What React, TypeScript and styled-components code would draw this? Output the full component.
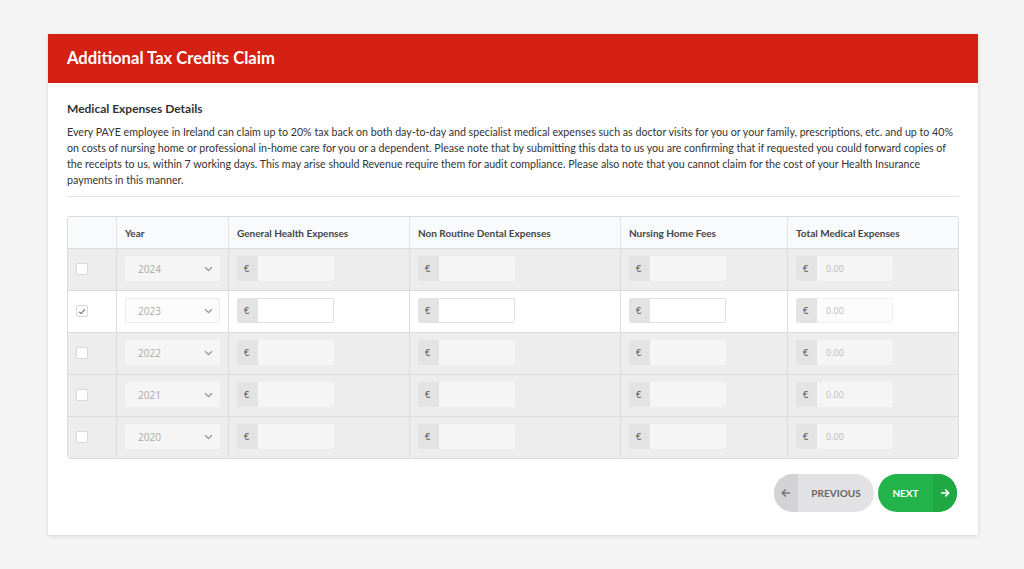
import React from "react";
import styled, { createGlobalStyle } from "styled-components";

const Global = createGlobalStyle`
  html, body { margin: 0; padding: 0; background: #f4f4f4; }
  body { font-family: Lato, "Open Sans", Arial, sans-serif; color: #333; }
  * { box-sizing: border-box; }
`;

const Page = styled.div`
  padding: 34px 46px 34px 48px;
  min-height: 569px;
`;

const Card = styled.div`
  width: 930px;
  background: #fff;
  box-shadow: 0 1px 4px rgba(0, 0, 0, 0.14);
`;

const Header = styled.div`
  height: 49px;
  background: #d42114;
  display: flex;
  align-items: center;
  padding: 0 19px 1px;
`;

const Title = styled.h1`
  margin: 0;
  font-size: 16.6px;
  font-weight: 700;
  color: #fff;
`;

const Body = styled.div`
  padding: 18px 19px 23px 19px;
`;

const SectionTitle = styled.h2`
  margin: 0 0 7px;
  font-size: 12px;
  line-height: 16px;
  font-weight: 700;
  color: #333;
`;

const Para = styled.p`
  margin: 0;
  font-size: 10.66px;
  line-height: 16px;
  color: #333;
`;

const Rule = styled.hr`
  border: 0;
  border-top: 1px solid #e2e2e2;
  margin: 8px 0 19px;
`;

const Table = styled.div`
  border: 1px solid #dcdcdc;
  border-radius: 3px;
  overflow: hidden;
  display: grid;
  grid-template-columns: 48px 112px 181px 211px 167px 1fr;
`;

const Th = styled.div<{ $first?: boolean }>`
  height: 31px;
  background: #f9fafc;
  font-size: 10px;
  font-weight: 700;
  color: #444;
  display: flex;
  align-items: center;
  padding: 0 8px;
  border-left: ${(p) => (p.$first ? "0" : "1px solid #e2e2e2")};
`;

const Td = styled.div<{ $first?: boolean; $active?: boolean }>`
  height: 42px;
  background: ${(p) => (p.$active ? "#fff" : "#ededed")};
  border-left: ${(p) => (p.$first ? "0" : "1px solid #dcdcdc")};
  border-top: 1px solid #dcdcdc;
  display: flex;
  align-items: flex-start;
  padding: 7px 8px 0;
`;

const CheckBox = styled.span`
  width: 12px;
  height: 12px;
  margin-top: 7px;
  border: 1px solid #d8d8d8;
  border-radius: 2px;
  background: #fff;
  display: flex;
  align-items: center;
  justify-content: center;
`;

const Select = styled.div<{ $active?: boolean }>`
  width: 96px;
  height: 25px;
  border-radius: 2px;
  background: ${(p) => (p.$active ? "#fcfcfc" : "#f5f5f5")};
  border: 1px solid ${(p) => (p.$active ? "#ececec" : "#f5f5f5")};
  display: flex;
  align-items: center;
  justify-content: space-between;
  padding: 0 6px 0 12px;
  font-size: 10px;
  color: #aaa;
  font-family: "Open Sans", Lato, sans-serif;
`;

const Group = styled.div`
  display: flex;
  height: 25px;
`;

const Addon = styled.span`
  width: 21px;
  background: #e3e3e3;
  border-radius: 2px 0 0 2px;
  font-size: 9px;
  color: #555;
  display: flex;
  align-items: center;
  padding-left: 7px;
`;

const Input = styled.span<{ $active?: boolean; $total?: boolean }>`
  width: 76px;
  border-radius: 0 2px 2px 0;
  background: ${(p) => (p.$active ? (p.$total ? "#fcfcfc" : "#fff") : "#f5f5f5")};
  border: 1px solid ${(p) => (p.$active ? (p.$total ? "#f0f0f0" : "#e0e0e0") : "#f5f5f5")};
  border-left: 0;
  font-size: 9px;
  color: #bbb;
  display: flex;
  align-items: center;
  padding-left: 9px;
  font-family: "Open Sans", Lato, sans-serif;
`;

const Actions = styled.div`
  display: flex;
  justify-content: flex-end;
  gap: 4px;
  margin-top: 15px;
  padding-right: 2px;
`;

const Btn = styled.button<{ $green?: boolean }>`
  height: 38px;
  border: 0;
  border-radius: 19px;
  overflow: hidden;
  display: flex;
  padding: 0;
  font-family: Lato, sans-serif;
  font-size: 10px;
  font-weight: 700;
  background: ${(p) => (p.$green ? "#22b34b" : "#e2e2e4")};
  color: ${(p) => (p.$green ? "#fff" : "#666")};
  cursor: pointer;
`;

const BtnIcon = styled.span<{ $green?: boolean }>`
  width: 24px;
  height: 100%;
  display: flex;
  align-items: center;
  justify-content: center;
  background: ${(p) => (p.$green ? "#1fa844" : "#d3d3d5")};
`;

const BtnLabel = styled.span<{ $w: number }>`
  width: ${(p) => p.$w}px;
  height: 100%;
  display: flex;
  align-items: center;
  justify-content: center;
`;

const Chevron = () => (
  <svg width="9" height="6" viewBox="0 0 9 6">
    <path d="M1 1.2 L4.5 4.5 L8 1.2" fill="none" stroke="#999" strokeWidth="1.3" />
  </svg>
);

const Check = () => (
  <svg width="8" height="7" viewBox="0 0 8 7">
    <path d="M1 3.8 L3 5.6 L7 1.2" fill="none" stroke="#888" strokeWidth="1.4" />
  </svg>
);

const Arrow = ({ dir, color }: { dir: "l" | "r"; color: string }) => (
  <svg width="10" height="10" viewBox="0 0 10 10" style={{ transform: dir === "l" ? "scaleX(-1)" : undefined }}>
    <path d="M1 5 H8.5 M5.2 1.5 L8.7 5 L5.2 8.5" fill="none" stroke={color} strokeWidth="1.6" />
  </svg>
);

const years = [
  { y: "2024", active: false },
  { y: "2023", active: true },
  { y: "2022", active: false },
  { y: "2021", active: false },
  { y: "2020", active: false },
];

const heads = [
  "",
  "Year",
  "General Health Expenses",
  "Non Routine Dental Expenses",
  "Nursing Home Fees",
  "Total Medical Expenses",
];

export default function App() {
  return (
    <>
      <Global />
      <Page>
        <Card>
          <Header>
            <Title>Additional Tax Credits Claim</Title>
          </Header>
          <Body>
            <SectionTitle>Medical Expenses Details</SectionTitle>
            <Para>
              Every PAYE employee in Ireland can claim up to 20% tax back on both day-to-day and specialist medical
              expenses such as doctor visits for you or your family, prescriptions, etc. and up to 40% on costs of
              nursing home or professional in-home care for you or a dependent. Please note that by submitting this
              data to us you are confirming that if requested you could forward copies of the receipts to us, within 7
              working days. This may arise should Revenue require them for audit compliance. Please also note that you
              cannot claim for the cost of your Health Insurance payments in this manner.
            </Para>
            <Rule />
            <Table>
              {heads.map((h, i) => (
                <Th key={i} $first={i === 0}>
                  {h}
                </Th>
              ))}
              {years.map((r) => (
                <React.Fragment key={r.y}>
                  <Td $first $active={r.active}>
                    <CheckBox>{r.active && <Check />}</CheckBox>
                  </Td>
                  <Td $active={r.active}>
                    <Select $active={r.active}>
                      <span>{r.y}</span>
                      <Chevron />
                    </Select>
                  </Td>
                  {[0, 1, 2].map((k) => (
                    <Td key={k} $active={r.active}>
                      <Group>
                        <Addon>€</Addon>
                        <Input $active={r.active} />
                      </Group>
                    </Td>
                  ))}
                  <Td $active={r.active}>
                    <Group>
                      <Addon>€</Addon>
                      <Input $active={r.active} $total>
                        0.00
                      </Input>
                    </Group>
                  </Td>
                </React.Fragment>
              ))}
            </Table>
            <Actions>
              <Btn>
                <BtnIcon>
                  <Arrow dir="l" color="#777" />
                </BtnIcon>
                <BtnLabel $w={76}>PREVIOUS</BtnLabel>
              </Btn>
              <Btn $green>
                <BtnLabel $w={55}>NEXT</BtnLabel>
                <BtnIcon $green>
                  <Arrow dir="r" color="#fff" />
                </BtnIcon>
              </Btn>
            </Actions>
          </Body>
        </Card>
      </Page>
    </>
  );
}
